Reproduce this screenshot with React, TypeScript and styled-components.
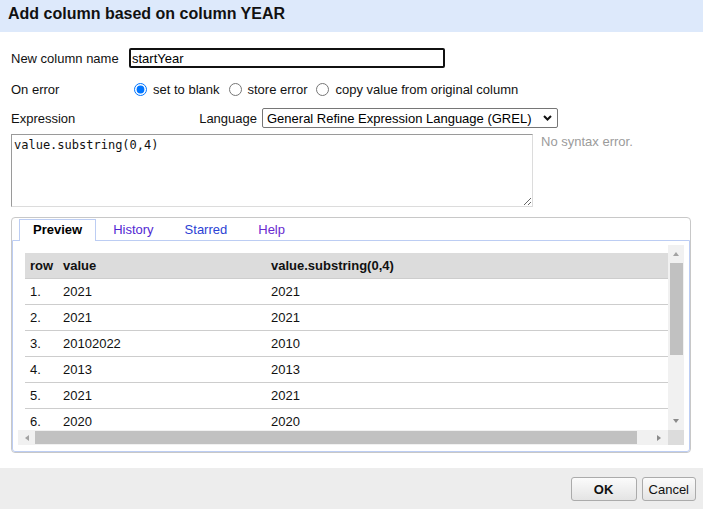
import React from "react";
import styled, { createGlobalStyle } from "styled-components";

const GlobalStyle = createGlobalStyle`
  html, body { margin: 0; padding: 0; height: 100%; }
  body {
    font-family: "Liberation Sans", Arial, sans-serif;
    font-size: 13px;
    color: #111;
    background: #fff;
  }
  #root { height: 100%; }
  * { box-sizing: border-box; }
`;

const Dialog = styled.div`
  height: 509px;
  width: 703px;
  display: flex;
  flex-direction: column;
  overflow: hidden;
`;

const Header = styled.div`
  height: 32px;
  flex: none;
  background: #dde9fb;
  padding-left: 8px;
  font-size: 16px;
  font-weight: bold;
  line-height: 27px;
  color: #111;
`;

const Body = styled.div`
  flex: 1;
  background: #fff;
  padding: 16px 0 0 11px;
  display: flex;
  flex-direction: column;
`;

const FieldRow = styled.div<{ $h: number; $mt: number }>`
  display: flex;
  align-items: center;
  height: ${(p) => p.$h}px;
  margin-top: ${(p) => p.$mt}px;
`;

const Label = styled.div`
  width: 118px;
  flex: none;
  color: #111;
`;

const NameInput = styled.input`
  width: 316px;
  height: 20px;
  border: 2px solid #111;
  border-radius: 2px;
  padding: 0 1px;
  font-family: "Liberation Sans", Arial, sans-serif;
  font-size: 13px;
  color: #000;
  outline: none;
`;

const RadioOption = styled.label`
  display: inline-flex;
  align-items: center;
  margin-right: 4px;
  color: #111;
  white-space: nowrap;
`;

const Radio = styled.input`
  width: 13px;
  height: 13px;
  margin: 0 6px 0 5px;
`;

const ExprRow = styled.div`
  display: flex;
  align-items: center;
  justify-content: space-between;
  width: 547px;
  height: 20px;
  margin-top: 10px;
`;

const LangGroup = styled.div`
  display: flex;
  align-items: center;
  gap: 5px;
`;

const SelectWrap = styled.div`
  position: relative;
  width: 296px;
  height: 20px;
`;

const LangSelect = styled.select`
  appearance: none;
  width: 100%;
  height: 100%;
  border: 1px solid #767676;
  border-radius: 2px;
  background: #fff;
  padding: 0 20px 0 4px;
  font-family: "Liberation Sans", Arial, sans-serif;
  font-size: 13px;
  color: #000;
  outline: none;
`;

const Chevron = styled.svg`
  position: absolute;
  right: 6px;
  top: 7px;
  pointer-events: none;
`;

const ExprArea = styled.div`
  display: flex;
  align-items: flex-start;
  margin-top: 6px;
`;

const CodeBox = styled.textarea`
  width: 522px;
  height: 73px;
  border: 1px solid;
  border-color: #9a9a9a #dcdcdc #dcdcdc #9a9a9a;
  padding: 3px 2px;
  font-family: "DejaVu Sans Mono", "Liberation Mono", monospace;
  font-size: 12px;
  line-height: 15px;
  color: #111;
  outline: none;
  resize: both;
  margin: 0;
`;

const Status = styled.div`
  margin-left: 8px;
  color: #9b9b9b;
  line-height: 15px;
`;

const TabsBox = styled.div`
  margin-top: 10px;
  width: 680px;
  border: 1px solid #c8c8c8;
  border-radius: 4px;
  padding-top: 1px;
  display: flex;
  flex-direction: column;
`;

const TabBar = styled.div`
  display: flex;
  height: 21px;
  padding-left: 7px;
`;

const Tab = styled.div<{ $active?: boolean; $color: string }>`
  position: relative;
  z-index: 1;
  height: 22px;
  padding: 0 13px;
  margin-right: 3px;
  border: 1px solid ${(p) => (p.$active ? "#bccdf3" : "transparent")};
  border-bottom: 0;
  background: ${(p) => (p.$active ? "#fff" : "transparent")};
  font-weight: ${(p) => (p.$active ? "bold" : "normal")};
  color: ${(p) => p.$color};
  line-height: 20px;
  cursor: pointer;
`;

const Panel = styled.div`
  border: 1px solid #bccdf3;
  border-radius: 0 0 3px 3px;
  padding: 4px 5px 6px 5px;
`;

const Viewport = styled.div`
  display: grid;
  grid-template-columns: 650px 16px;
  grid-template-rows: 185px 15px;
`;

const Content = styled.div`
  overflow: hidden;
`;

const Table = styled.div`
  width: 652px;
  margin: 8px 0 0 7px;
`;

const Row = styled.div<{ $head?: boolean }>`
  display: grid;
  grid-template-columns: 33px 208px 411px;
  align-items: center;
  height: 26px;
  border-bottom: 1px solid #cdcdcd;
  background: ${(p) => (p.$head ? "#dcdcdc" : "#fff")};
  font-weight: ${(p) => (p.$head ? "bold" : "normal")};
  color: #111;
`;

const Cell = styled.div`
  padding-left: 5px;
  white-space: nowrap;
`;

const VScroll = styled.div`
  background: #f1f1f1;
  display: flex;
  flex-direction: column;
`;

const HScroll = styled.div`
  background: #f1f1f1;
  display: flex;
  align-items: center;
`;

const ScrollBtn = styled.div<{ $size: number; $vertical?: boolean }>`
  flex: none;
  ${(p) => (p.$vertical ? `height: ${p.$size}px;` : `width: ${p.$size}px; height: 15px;`)}
  display: flex;
  align-items: center;
  justify-content: center;
`;

const Arrow = styled.div<{ $dir: "up" | "down" | "left" | "right" }>`
  width: 0;
  height: 0;
  ${(p) =>
    p.$dir === "up"
      ? "border-left: 3.5px solid transparent; border-right: 3.5px solid transparent; border-bottom: 4px solid #a3a3a3;"
      : p.$dir === "down"
      ? "border-left: 3.5px solid transparent; border-right: 3.5px solid transparent; border-top: 4px solid #8a8a8a;"
      : p.$dir === "left"
      ? "border-top: 3.5px solid transparent; border-bottom: 3.5px solid transparent; border-right: 4px solid #a3a3a3;"
      : "border-top: 3.5px solid transparent; border-bottom: 3.5px solid transparent; border-left: 4px solid #8a8a8a;"}
`;

const VThumb = styled.div`
  height: 92px;
  width: 13px;
  margin-left: 2px;
  background: #c1c1c1;
`;

const HThumb = styled.div`
  width: 602px;
  height: 13px;
  background: #c1c1c1;
`;

const Spacer = styled.div`
  flex: 1;
`;

const Corner = styled.div`
  background: #dcdcdc;
`;

const Footer = styled.div`
  height: 41px;
  flex: none;
  background: #ededed;
  display: flex;
  justify-content: flex-end;
  align-items: flex-start;
  gap: 5px;
  padding: 9px 7px 0 0;
`;

const Button = styled.button<{ $primary?: boolean }>`
  height: 24px;
  min-width: ${(p) => (p.$primary ? "66px" : "0")};
  padding: 0 6px;
  border: 1px solid #ababab;
  border-radius: 3px;
  background: linear-gradient(#fbfbfb, #e4e4e4);
  font-family: "Liberation Sans", Arial, sans-serif;
  font-size: 13px;
  font-weight: ${(p) => (p.$primary ? "bold" : "normal")};
  color: #111;
  cursor: pointer;
`;

const rows: [string, string, string][] = [
  ["1.", "2021", "2021"],
  ["2.", "2021", "2021"],
  ["3.", "20102022", "2010"],
  ["4.", "2013", "2013"],
  ["5.", "2021", "2021"],
  ["6.", "2020", "2020"],
];

export default function App() {
  return (
    <>
      <GlobalStyle />
      <Dialog>
        <Header>Add column based on column YEAR</Header>
        <Body>
          <FieldRow $h={20} $mt={0}>
            <Label>New column name</Label>
            <NameInput defaultValue="startYear" />
          </FieldRow>
          <FieldRow $h={18} $mt={12}>
            <Label>On error</Label>
            <RadioOption>
              <Radio type="radio" name="onerror" defaultChecked />
              set to blank
            </RadioOption>
            <RadioOption>
              <Radio type="radio" name="onerror" />
              store error
            </RadioOption>
            <RadioOption>
              <Radio type="radio" name="onerror" />
              copy value from original column
            </RadioOption>
          </FieldRow>
          <ExprRow>
            <span>Expression</span>
            <LangGroup>
              <span>Language</span>
              <SelectWrap>
                <LangSelect defaultValue="grel">
                  <option value="grel">General Refine Expression Language (GREL)</option>
                  <option value="jython">Python / Jython</option>
                  <option value="clojure">Clojure</option>
                </LangSelect>
                <Chevron width="9" height="6" viewBox="0 0 9 6">
                  <polyline points="1,1 4.5,4.5 8,1" fill="none" stroke="#111" strokeWidth="2" />
                </Chevron>
              </SelectWrap>
            </LangGroup>
          </ExprRow>
          <ExprArea>
            <CodeBox defaultValue="value.substring(0,4)" spellCheck={false} />
            <Status>No syntax error.</Status>
          </ExprArea>
          <TabsBox>
            <TabBar>
              <Tab $active $color="#000">Preview</Tab>
              <Tab $color="#5228d2">History</Tab>
              <Tab $color="#2c42d4">Starred</Tab>
              <Tab $color="#6a2ad0">Help</Tab>
            </TabBar>
            <Panel>
              <Viewport>
                <Content>
                  <Table>
                    <Row $head>
                      <Cell>row</Cell>
                      <Cell>value</Cell>
                      <Cell>value.substring(0,4)</Cell>
                    </Row>
                    {rows.map((r) => (
                      <Row key={r[0]}>
                        <Cell>{r[0]}</Cell>
                        <Cell>{r[1]}</Cell>
                        <Cell>{r[2]}</Cell>
                      </Row>
                    ))}
                  </Table>
                </Content>
                <VScroll>
                  <ScrollBtn $vertical $size={18}>
                    <Arrow $dir="up" />
                  </ScrollBtn>
                  <VThumb />
                  <Spacer />
                  <ScrollBtn $vertical $size={18}>
                    <Arrow $dir="down" />
                  </ScrollBtn>
                </VScroll>
                <HScroll>
                  <ScrollBtn $size={17}>
                    <Arrow $dir="left" />
                  </ScrollBtn>
                  <HThumb />
                  <Spacer />
                  <ScrollBtn $size={18}>
                    <Arrow $dir="right" />
                  </ScrollBtn>
                </HScroll>
                <Corner />
              </Viewport>
            </Panel>
          </TabsBox>
        </Body>
        <Footer>
          <Button $primary>OK</Button>
          <Button>Cancel</Button>
        </Footer>
      </Dialog>
    </>
  );
}
